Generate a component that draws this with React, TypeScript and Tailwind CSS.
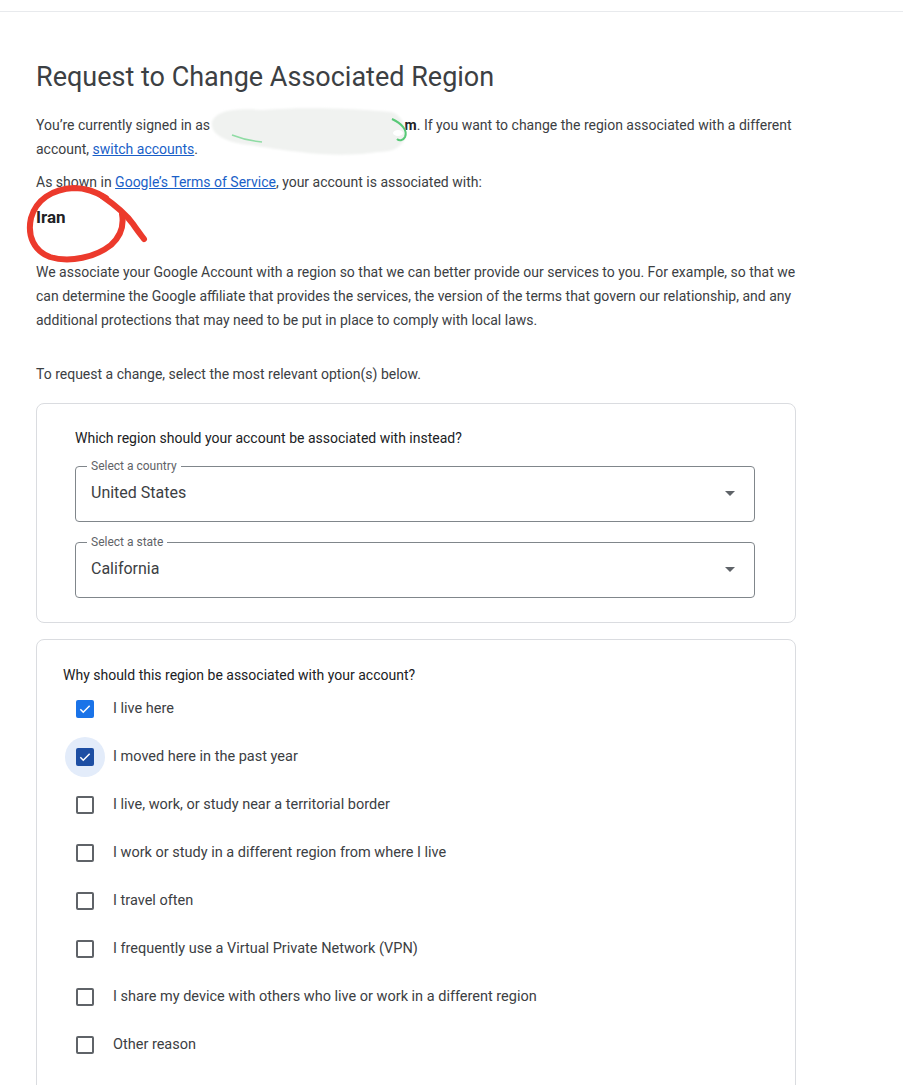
import React from "react";

const reasons = [
  { label: "I live here", checked: true },
  { label: "I moved here in the past year", checked: true, focused: true },
  { label: "I live, work, or study near a territorial border" },
  { label: "I work or study in a different region from where I live" },
  { label: "I travel often" },
  { label: "I frequently use a Virtual Private Network (VPN)" },
  { label: "I share my device with others who live or work in a different region" },
  { label: "Other reason" },
];

function SelectField({ label, value }: { label: string; value: string }) {
  return (
    <fieldset className="rounded-[4px] border border-[#80868b] px-[11px] pb-[7px]">
      <legend className="px-1 text-[12px] leading-[12px] text-[#5f6368]">{label}</legend>
      <div className="h-[42px] flex items-center">
        <span className="flex-1 px-1 text-[16px] text-[#3c4043]">{value}</span>
        <svg width="10" height="5" viewBox="0 0 10 5" className="mr-[8px]">
          <path d="M0 0h10L5 5z" fill="#5f6368" />
        </svg>
      </div>
    </fieldset>
  );
}

function Checkbox({ checked, focused }: { checked?: boolean; focused?: boolean }) {
  return (
    <div
      className={`w-10 h-10 rounded-full flex items-center justify-center ${
        focused ? "bg-[#e3ecfa]" : ""
      }`}
    >
      {checked ? (
        <div
          className={`w-[18px] h-[18px] rounded-[2px] flex items-center justify-center ${
            focused ? "bg-[#1d4ea3]" : "bg-[#1a73e8]"
          }`}
        >
          <svg width="14" height="14" viewBox="0 0 24 24">
            <path d="M4 12.5l5 5L20 6.5" fill="none" stroke="#fff" strokeWidth="2.6" />
          </svg>
        </div>
      ) : (
        <div className="w-[18px] h-[18px] rounded-[2px] border-2 border-[#5f6368]" />
      )}
    </div>
  );
}

export default function App() {
  return (
    <div className="relative min-h-screen bg-white font-['Roboto','Liberation_Sans',sans-serif] text-[#3c4043] overflow-hidden">
      <div className="h-[12px] border-b border-[#e8eaed]" />

      <div className="ml-[36px] w-[760px] pt-[49px]">
        <h1 className="text-[27px] leading-8 text-[#3c4043]">Request to Change Associated Region</h1>

        <p className="mt-[20px] text-[14px] leading-6">
          You’re currently signed in as{" "}
          <span className="inline-block w-[191px]" />
          <span className="font-bold text-[#202124]">m</span>. If you want to change the region associated
          with a different account,{" "}
          <a href="#" className="text-[#1a5fc8] underline">
            switch accounts
          </a>
          .
        </p>

        <p className="mt-[9px] text-[14px] leading-6">
          As shown in{" "}
          <a href="#" className="text-[#1a5fc8] underline">
            Google’s Terms of Service
          </a>
          , your account is associated with:
        </p>

        <p className="mt-[11px] text-[17px] leading-6 font-bold text-[#202124]">Iran</p>

        <p className="mt-[31px] text-[14px] leading-6">
          We associate your Google Account with a region so that we can better provide our services to you. For
          example, so that we can determine the Google affiliate that provides the services, the version of the
          terms that govern our relationship, and any additional protections that may need to be put in place to
          comply with local laws.
        </p>

        <p className="mt-[30px] text-[14px] leading-6">To request a change, select the most relevant option(s) below.</p>

        <div className="mt-[17px] rounded-lg border border-[#dadce0] pl-[38px] pr-[40px] pt-[24px] pb-[24px]">
          <p className="text-[14px] leading-5 text-[#202124]">Which region should your account be associated with instead?</p>
          <div className="mt-[12px] flex flex-col gap-[14px]">
            <SelectField label="Select a country" value="United States" />
            <SelectField label="Select a state" value="California" />
          </div>
        </div>

        <div className="mt-[16px] rounded-lg border border-[#dadce0] pl-[26px] pt-[25px] pb-[40px]">
          <p className="text-[14px] leading-5 text-[#202124]">Why should this region be associated with your account?</p>
          <div className="flex flex-col pl-[2px]">
            {reasons.map((r) => (
              <div key={r.label} className="h-12 flex items-center gap-2">
                <Checkbox checked={r.checked} focused={r.focused} />
                <span className="text-[14.5px] text-[#3c4043]">{r.label}</span>
              </div>
            ))}
          </div>
        </div>
      </div>

      {/* redaction smudge over the email */}
      <svg className="absolute left-[200px] top-[100px] pointer-events-none" width="220" height="70" viewBox="200 100 220 70">
        <defs>
          <filter id="soft" x="-10%" y="-30%" width="120%" height="160%">
            <feGaussianBlur stdDeviation="1" />
          </filter>
        </defs>
        <path
          d="M212 122 C216 110 238 108 262 110 C300 107 350 108 392 112 C402 116 407 127 405 138 C401 149 390 152 378 152 C360 155 330 156 300 152 C280 150 265 147 250 145 C230 143 210 136 212 122 Z"
          fill="#f0f2f0"
          filter="url(#soft)"
        />
        <path d="M232 135 C242 139 252 141 262 142" fill="none" stroke="#8fdca4" strokeWidth="1.4" />
        <path d="M392 119 C401 123 408 130 405 137 C403 141 399 141 397 139" fill="none" stroke="#58c977" strokeWidth="2" />
        <ellipse cx="398" cy="133" rx="5" ry="3" fill="#ffffff" />
      </svg>

      {/* hand-drawn circle around the region */}
      <svg className="absolute left-0 top-0 pointer-events-none" width="200" height="280" viewBox="0 0 200 280">
        <g fill="none" stroke="#ec3a2c" strokeWidth="6" strokeLinecap="round">
          <path d="M106 198 C95 191 86 188 74 188 C52 189 36 200 31 218 C27 236 34 251 50 257 C70 263 96 257 111 245 C121 236 124 225 122 214" />
          <path d="M102 196 C115 205 126 214 133 224 C137 230 141 235 144 239" />
        </g>
      </svg>
    </div>
  );
}
